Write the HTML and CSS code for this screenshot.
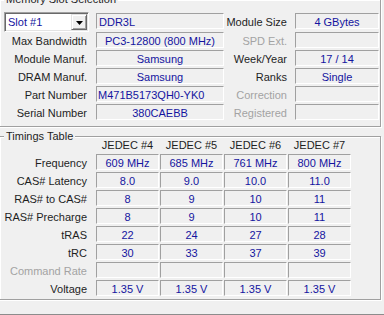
FILE: index.html
```html
<!DOCTYPE html>
<html>
<head>
<meta charset="utf-8">
<link rel="stylesheet" href="styles.css">
</head>
<body>
<div class="window">
  <div class="group slot">
    <span class="legend">Memory Slot Selection</span>
    <div class="slot-grid">
      <div class="combo r1">
        <span class="combo-text">Slot #1</span>
        <span class="combo-btn"><svg width="7" height="4" viewBox="0 0 7 4"><polygon points="0,0 7,0 3.5,4" fill="#000"/></svg></span>
      </div>
      <div class="field left r1">DDR3L</div>
      <div class="label r1">Module Size</div>
      <div class="field r1">4 GBytes</div>

      <div class="label">Max Bandwidth</div>
      <div class="field">PC3-12800 (800 MHz)</div>
      <div class="label dis">SPD Ext.</div>
      <div class="field"></div>

      <div class="label">Module Manuf.</div>
      <div class="field">Samsung</div>
      <div class="label">Week/Year</div>
      <div class="field">17 / 14</div>

      <div class="label">DRAM Manuf.</div>
      <div class="field">Samsung</div>
      <div class="label">Ranks</div>
      <div class="field">Single</div>

      <div class="label">Part Number</div>
      <div class="field part">M471B5173QH0-YK0</div>
      <div class="label dis">Correction</div>
      <div class="field"></div>

      <div class="label">Serial Number</div>
      <div class="field">380CAEBB</div>
      <div class="label dis">Registered</div>
      <div class="field"></div>
    </div>
  </div>

  <div class="group timings">
    <span class="legend">Timings Table</span>
    <div class="tgrid">
      <div></div>
      <div class="head">JEDEC #4</div>
      <div class="head">JEDEC #5</div>
      <div class="head">JEDEC #6</div>
      <div class="head">JEDEC #7</div>

      <div class="label">Frequency</div>
      <div class="field">609 MHz</div>
      <div class="field">685 MHz</div>
      <div class="field">761 MHz</div>
      <div class="field">800 MHz</div>

      <div class="label">CAS# Latency</div>
      <div class="field">8.0</div>
      <div class="field">9.0</div>
      <div class="field">10.0</div>
      <div class="field">11.0</div>

      <div class="label">RAS# to CAS#</div>
      <div class="field">8</div>
      <div class="field">9</div>
      <div class="field">10</div>
      <div class="field">11</div>

      <div class="label">RAS# Precharge</div>
      <div class="field">8</div>
      <div class="field">9</div>
      <div class="field">10</div>
      <div class="field">11</div>

      <div class="label">tRAS</div>
      <div class="field">22</div>
      <div class="field">24</div>
      <div class="field">27</div>
      <div class="field">28</div>

      <div class="label">tRC</div>
      <div class="field">30</div>
      <div class="field">33</div>
      <div class="field">37</div>
      <div class="field">39</div>

      <div class="label dis">Command Rate</div>
      <div class="field"></div>
      <div class="field"></div>
      <div class="field"></div>
      <div class="field"></div>

      <div class="label">Voltage</div>
      <div class="field">1.35 V</div>
      <div class="field">1.35 V</div>
      <div class="field">1.35 V</div>
      <div class="field">1.35 V</div>
    </div>
  </div>
</div>
</body>
</html>
```

FILE: styles.css
```css
* {
  box-sizing: border-box;
}

body {
  margin: 0;
  background: #f0f0f0;
  font-family: "Liberation Sans", Arial, sans-serif;
  font-size: 11px;
  line-height: 16px;
  color: #1e1e1e;
}

.window {
  width: 384px;
  height: 315px;
  overflow: hidden;
  border-bottom: 1px solid #8c8c8c;
}

.group {
  position: relative;
  width: 382px;
  margin-left: -1px;
  border: 1px solid #a0a0a0;
  box-shadow: inset 1px 1px 0 #fff, 1px 1px 0 #fff;
}

.slot {
  margin-top: -1px;
  padding: 12px 1px 6px 0;
}

.timings {
  margin-top: 9px;
  padding: 0 1px 3px 0;
}

.legend {
  position: absolute;
  top: -7px;
  left: 4px;
  padding: 0 2px;
  background: #f0f0f0;
  line-height: 12px;
  white-space: nowrap;
}

.slot-grid {
  display: grid;
  grid-template-columns: 96px 128px 71px 84px;
  grid-template-rows: 18px repeat(5, 16px);
  row-gap: 2px;
}

.tgrid {
  display: grid;
  grid-template-columns: 95px repeat(4, 63px);
  grid-template-rows: 15px repeat(8, 16px);
  column-gap: 1px;
  row-gap: 2px;
}

.label {
  height: 16px;
  padding-top: 2px;
  line-height: 14px;
  text-align: right;
  white-space: nowrap;
  padding-right: 8px;
}

.slot-grid .label:nth-child(4n+1) {
  padding-right: 9px;
}

.tgrid .label {
  padding-right: 8px;
}

.label.dis {
  color: #a3a3a3;
}

.head {
  padding-top: 1px;
  line-height: 14px;
  text-align: center;
  white-space: nowrap;
}

.field {
  height: 16px;
  border: 1px solid;
  border-color: #a0a0a0 #fff #fff #a0a0a0;
  padding-top: 2px;
  line-height: 12px;
  text-align: center;
  color: #1414a0;
  white-space: nowrap;
  overflow: hidden;
}

.field.left {
  text-align: left;
  padding-left: 2px;
}

.field.part {
  text-align: left;
  padding-left: 1px;
}

.r1 {
  margin-top: 1px;
}

.combo {
  display: flex;
  align-self: start;
  width: 85px;
  height: 20px;
  margin-top: 0;
  margin-left: 4px;
  padding: 1px;
  background: #fff;
  border: 1px solid;
  border-color: #a0a0a0 #fff #fff #a0a0a0;
  box-shadow: inset 1px 1px 0 #696969, inset -1px -1px 0 #e3e3e3;
}

.combo-text {
  flex: 1;
  padding-left: 2px;
  line-height: 16px;
  color: #1414a0;
  white-space: nowrap;
}

.combo-btn {
  display: flex;
  align-items: center;
  justify-content: center;
  width: 16px;
  height: 16px;
  padding-top: 1px;
  background: #f0f0f0;
  border: 1px solid;
  border-color: #e3e3e3 #696969 #696969 #e3e3e3;
  box-shadow: inset 1px 1px 0 #fff, inset -1px -1px 0 #a0a0a0;
}
```
